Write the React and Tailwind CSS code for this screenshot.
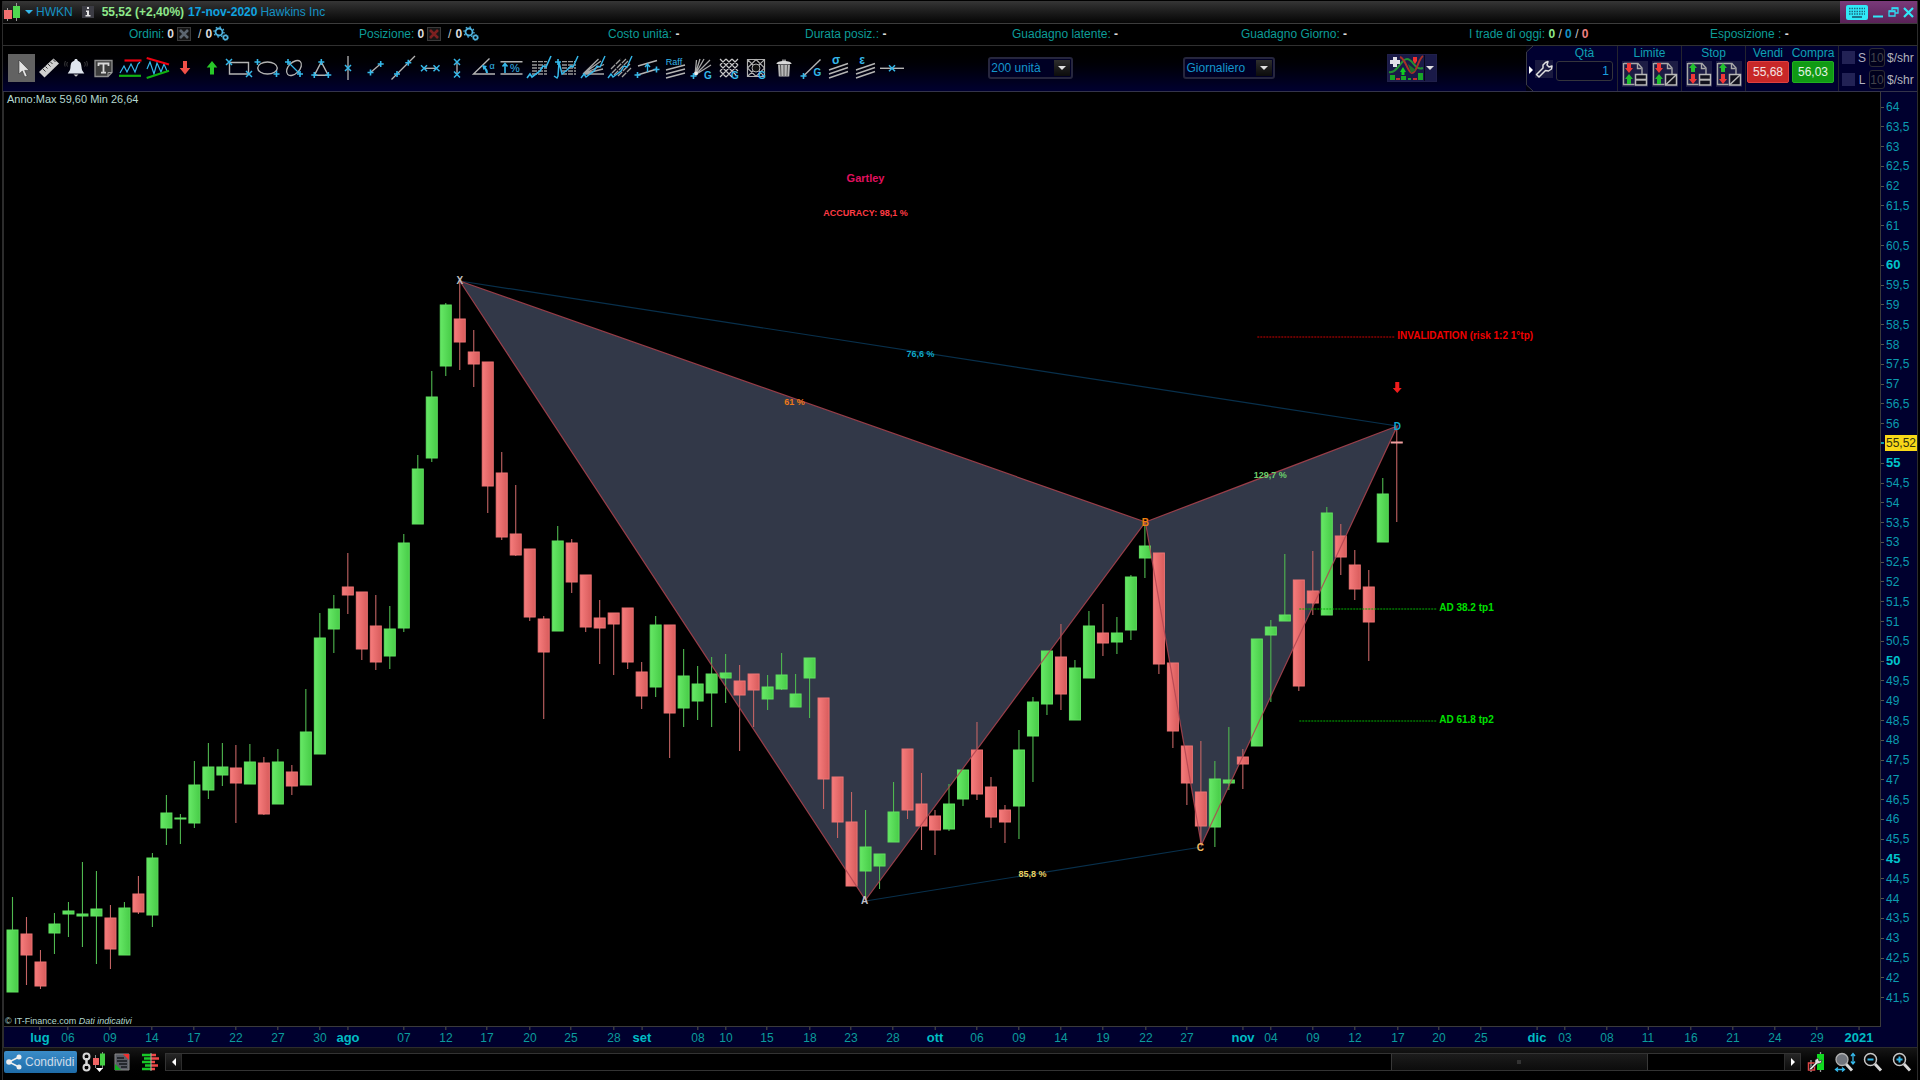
import React from "react";

const CYAN = "#35b8ea";
const GREY = "#b4b4b4";

/* [direction, high, body top, body bottom, low] in chart units */
const CANDLES = [
  ["u", 897, 930, 992, 992], ["d", 917, 934, 955, 985], ["d", 950, 962, 986, 989], ["u", 913, 924, 933, 954],
  ["u", 902, 911, 914, 937], ["u", 862, 914, 916, 947], ["u", 871, 909, 916, 964], ["d", 905, 918, 949, 969],
  ["u", 902, 908, 955, 955], ["d", 876, 894, 912, 914], ["u", 853, 858, 915, 927], ["u", 795, 813, 828, 845],
  ["u", 814, 818, 819, 844], ["u", 761, 785, 823, 828], ["u", 743, 767, 790, 799], ["u", 743, 767, 775, 786],
  ["d", 745, 768, 783, 823], ["u", 744, 762, 784, 784], ["d", 757, 763, 814, 815], ["u", 749, 762, 804, 804],
  ["d", 765, 772, 786, 795], ["u", 689, 732, 785, 785], ["u", 613, 638, 754, 754], ["u", 595, 609, 629, 653],
  ["d", 553, 587, 595, 614], ["d", 592, 592, 649, 660], ["d", 595, 626, 662, 670], ["u", 606, 629, 656, 669],
  ["u", 534, 543, 628, 632], ["u", 455, 469, 524, 524], ["u", 371, 397, 458, 462], ["u", 303, 305, 366, 376],
  ["d", 281, 319, 342, 370], ["d", 330, 352, 364, 387], ["d", 362, 362, 486, 513], ["d", 452, 473, 537, 540],
  ["d", 485, 534, 555, 556], ["d", 549, 549, 617, 621], ["d", 616, 619, 652, 719], ["u", 526, 541, 631, 631],
  ["d", 539, 543, 582, 593], ["d", 575, 575, 627, 632], ["d", 600, 618, 628, 664], ["d", 613, 613, 624, 675],
  ["d", 608, 608, 662, 669], ["d", 662, 672, 696, 709], ["u", 616, 625, 687, 697], ["d", 625, 625, 713, 758],
  ["u", 649, 676, 708, 727], ["u", 666, 684, 701, 720], ["u", 657, 674, 693, 727], ["u", 654, 673, 678, 703],
  ["d", 665, 681, 695, 751], ["d", 674, 674, 690, 727], ["u", 675, 687, 699, 710], ["u", 653, 675, 689, 690],
  ["u", 674, 694, 707, 707], ["u", 658, 658, 678, 718], ["d", 698, 698, 779, 809], ["d", 777, 777, 822, 838],
  ["d", 792, 822, 886, 886], ["u", 810, 847, 871, 900], ["u", 854, 854, 866, 889], ["u", 782, 812, 842, 842],
  ["d", 749, 749, 810, 819], ["d", 773, 804, 826, 850], ["d", 810, 816, 830, 855], ["u", 784, 804, 829, 831],
  ["u", 770, 770, 799, 806], ["d", 722, 750, 794, 800], ["d", 777, 787, 817, 828], ["d", 805, 810, 822, 843],
  ["u", 730, 750, 806, 839], ["u", 697, 702, 736, 782], ["u", 651, 651, 704, 715], ["d", 624, 657, 694, 710],
  ["u", 660, 668, 720, 720], ["u", 611, 626, 678, 678], ["d", 604, 633, 643, 656], ["u", 617, 633, 642, 654],
  ["u", 575, 577, 630, 640], ["u", 523, 546, 558, 578], ["d", 553, 553, 664, 674], ["d", 663, 663, 731, 748],
  ["d", 746, 746, 783, 805], ["d", 741, 792, 826, 845], ["u", 761, 779, 827, 847], ["u", 727, 780, 783, 790],
  ["d", 749, 757, 764, 789], ["u", 639, 639, 746, 746], ["u", 620, 627, 635, 702], ["u", 554, 615, 621, 621],
  ["d", 580, 580, 686, 691], ["d", 551, 591, 603, 615], ["u", 507, 513, 615, 615], ["d", 524, 536, 557, 575],
  ["d", 550, 565, 589, 600], ["d", 570, 587, 622, 661], ["u", 478, 494, 542, 542], ["d", 427, 442, 443, 522],
];

const X0 = 4;
const Y0 = 92;
const W = 1877;
const H = 934;

const DATES = [
  ["lug", 40], ["06", 68], ["09", 110], ["14", 152], ["17", 194], ["22", 236], ["27", 278], ["30", 320],
  ["ago", 348], ["07", 404], ["12", 446], ["17", 487], ["20", 530], ["25", 571], ["28", 614], ["set", 642],
  ["08", 698], ["10", 726], ["15", 767], ["18", 810], ["23", 851], ["28", 893], ["ott", 935], ["06", 977],
  ["09", 1019], ["14", 1061], ["19", 1103], ["22", 1146], ["27", 1187], ["nov", 1243], ["04", 1271],
  ["09", 1313], ["12", 1355], ["17", 1398], ["20", 1439], ["25", 1481], ["dic", 1537], ["03", 1565],
  ["08", 1607], ["11", 1648], ["16", 1691], ["21", 1733], ["24", 1775], ["29", 1817], ["2021", 1859],
];

/* The 55,5 step is left out: the last-price tag sits on it */
const PRICES = Array.from({ length: 46 }, (_, i) => 64 - i / 2).filter((p) => p !== 55.5);

const centred = "absolute -translate-x-1/2 -translate-y-1/2 whitespace-nowrap";
const started = "absolute -translate-y-1/2 whitespace-nowrap";

const NOTES = [
  { t: "Gartley", x: 866, y: 178, c: centred + " text-[11px] font-bold text-[#e0105f]" },
  { t: "ACCURACY: 98,1 %", x: 866, y: 213, c: centred + " text-[9px] font-bold text-[#ff3b45]" },
  { t: "76,6 %", x: 921, y: 354, c: centred + " text-[9px] font-bold text-[#0fa8c8]" },
  { t: "61 %", x: 795, y: 402, c: centred + " text-[9px] font-bold text-[#f07818]" },
  { t: "129,7 %", x: 1271, y: 475, c: centred + " text-[9px] font-bold text-[#6cd06c]" },
  { t: "85,8 %", x: 1033, y: 874, c: centred + " text-[9px] font-bold text-[#e8d060]" },
  { t: "X", x: 460, y: 281, c: centred + " text-[10px] font-bold text-[#c0c0c0]" },
  { t: "A", x: 865, y: 901, c: centred + " text-[10px] font-bold text-[#c0c0c8]" },
  { t: "B", x: 1146, y: 523, c: centred + " text-[10px] font-bold text-[#f08010]" },
  { t: "C", x: 1201, y: 848, c: centred + " text-[10px] font-bold text-[#f0b860]" },
  { t: "D", x: 1398, y: 427, c: centred + " text-[10px] font-bold text-[#10a8d0]" },
  { t: "INVALIDATION (risk 1:2 1°tp)", x: 1398, y: 336, c: started + " text-[10px] font-bold text-[#f00000]" },
  { t: "AD 38.2 tp1", x: 1440, y: 608, c: started + " text-[10px] font-bold text-[#00e000]" },
  { t: "AD 61.8 tp2", x: 1440, y: 720, c: started + " text-[10px] font-bold text-[#00e000]" },
];

function Plus({ x, y }) {
  return <path d={`M${x - 3} ${y}h6M${x} ${y - 3}v6`} stroke={CYAN} strokeWidth="1.6" />;
}
function Cross({ x, y }) {
  return <path d={`M${x - 3} ${y - 3}l6 6M${x + 3} ${y - 3}l-6 6`} stroke={CYAN} strokeWidth="1.5" />;
}
function Letter({ x, y, size = 10, children, bold = true }) {
  return (
    <text x={x} y={y} fontSize={size} fontWeight={bold ? 700 : 400} fill={CYAN} textAnchor="middle" fontFamily="Liberation Sans, sans-serif">
      {children}
    </text>
  );
}
const BLUE_ZIG = "M2 24l3-4 2 3 8-6 3-5 3 1 5-11";

const TOOLS = [
  ["Cursore", <path d="M11 6v14l3.300-3 2.500 6 2.400-1-2.500-5.600h4.500z" fill="#e4e4e4" stroke="#333" strokeWidth=".6" />],
  ["Righello", <g><path d="M18.500 4.500l5.500 5L9.500 23.500 4 18z" fill="#d0d0d0" /><path d="M8 15l2.500 2.500M10.500 12.500l2 2M13 10l2.500 2.500M15.500 8l2 2M18 5.500l2.500 2.500" stroke="#333" strokeWidth="1" /></g>],
  ["Allarme", <g><path d="M14 5c1 0 1.700.7 1.700 1.700 3 .8 3.600 3.300 3.800 6.300.2 3 1 4 2.800 6.500H5.700C7.500 17 8.300 16 8.500 13c.2-3 .8-5.500 3.800-6.300C12.300 5.700 13 5 14 5z" fill="#e0e6ee" /><path d="M11.500 20.500h5l-2.500 2.300z" fill="#c8c8c8" /><path d="M5.500 8c-1 1.500-1 3 0 4.500M3.500 7c-1 2-1 4-.4 5.500M22.500 8c1 1.500 1 3 0 4.500M24.500 7c1 2 1 4 .4 5.500" stroke="#555" strokeWidth=".7" /></g>],
  ["Testo", <g><path d="M6 6.500h17v12l-4 4H6z" fill="#3c3c3c" stroke="#909090" strokeWidth="1.300" /><path d="M23 18.500h-4v4" stroke="#a0a0a0" /><path d="M9.500 12V9.500h10V12M14.500 9.500v9M12 18.700h5" stroke="#d8d8d8" strokeWidth="1.800" /></g>],
  ["Supporto e resistenza", <g><path d="M4 19l4-7 3 6 4-8 4 8 3-8 2-2" stroke={CYAN} strokeWidth="1.200" /><path d="M8.500 6.500h17" stroke="#f00010" strokeWidth="2.200" /><path d="M3 21.800h22" stroke="#10b010" strokeWidth="2.200" /></g>],
  ["Triangolo automatico", <g><path d="M3 15l3-7 4 12 3-11 4 9 3-8 3 7" stroke={CYAN} strokeWidth="1.200" /><path d="M2.700 4L25 10.500" stroke="#f00010" strokeWidth="2.200" /><path d="M2.700 24L25 16.700" stroke="#10b010" strokeWidth="2.200" /></g>],
  ["Freccia giù", <path d="M12 7h4v7h3.300L14 20.500 8.700 14H12z" fill="#f05048" />],
  ["Freccia su", <path d="M12 20.500h4v-7h3.300L14 7 8.700 13.500H12z" fill="#28c828" />],
  ["Rettangolo", <g><path d="M4.500 8.500h19v11.500h-19z" stroke={GREY} strokeWidth="1.400" /><Cross x={4} y={8} /><Cross x={24} y={20} /></g>],
  ["Ellisse", <g><ellipse cx="14.500" cy="14" rx="9.800" ry="6" stroke={GREY} strokeWidth="1.400" /><Plus x={4.500} y={8} /><Plus x={23.500} y={20} /></g>],
  ["Ellisse obliqua", <g><ellipse cx="14" cy="14" rx="9" ry="5.500" transform="rotate(-45 14 14)" stroke={GREY} strokeWidth="1.300" /><path d="M8 8l12 12" stroke={CYAN} strokeWidth="1.200" /><Plus x={8} y={8} /><Plus x={20} y={20} /></g>],
  ["Triangolo", <g><path d="M14.300 8l7 13.300h-14z" stroke={GREY} strokeWidth="1.400" /><Plus x={14.300} y={8} /><Plus x={7.300} y={21} /><Plus x={21.300} y={21} /></g>],
  ["Linea verticale", <g><path d="M14 2v24" stroke={GREY} strokeWidth="1.300" /><Cross x={14} y={14} /></g>],
  ["Segmento", <g><path d="M9 19L20 9.500" stroke={GREY} strokeWidth="1.300" /><Plus x={9.500} y={18.500} /><Plus x={19.700} y={10} /></g>],
  ["Retta", <g><path d="M2.500 25.500L26 2" stroke={GREY} strokeWidth="1.300" /><Plus x={8} y={20} /><Plus x={19.300} y={8.700} /></g>],
  ["Segmento orizzontale", <g><path d="M8 14.300h12.500" stroke={GREY} strokeWidth="1.300" /><Cross x={8} y={14.300} /><Cross x={20.500} y={14.300} /></g>],
  ["Segmento verticale", <g><path d="M14 8v12.500" stroke={GREY} strokeWidth="1.300" /><Cross x={14} y={8} /><Cross x={14} y={20.500} /></g>],
  ["Angolo", <g><path d="M19.500 4.500L3.500 20H25" stroke={GREY} strokeWidth="1.400" /><path d="M17 19c0-3-1-4-3-6" stroke={CYAN} strokeWidth="2" /><path d="M12 11l5 1-3.500 4z" fill={CYAN} /><Letter x={22} y={15} size={9} bold={false}>α</Letter></g>],
  ["Variazione percentuale", <g><path d="M3.500 7.700h22M3.500 20h22" stroke={GREY} strokeWidth="1.400" /><path d="M8 19v-9M5.500 12.500L8 9.500l2.500 3" stroke={CYAN} strokeWidth="1.600" /><Letter x={18} y={18} size={11} bold={false}>%</Letter></g>],
  ["Ritracciamenti di Fibonacci", <g><path d="M7 7.700h15M7 11h15M7 14h15M7 17h15M7 20h15" stroke="#989898" strokeWidth="1.300" strokeDasharray="5 1" /><path d={BLUE_ZIG} stroke={CYAN} strokeWidth="1.600" /></g>],
  ["Estensioni di Fibonacci", <g><path d="M10 7.700h14M10 11h14M10 14h14M10 17h14M10 20h14" stroke="#989898" strokeWidth="1.300" strokeDasharray="5 1" /><path d="M2 22l3 2 1-2 1-14 3 12 5-4 4-4 2 1 5-11" stroke={CYAN} strokeWidth="1.500" /><Plus x={6} y={8} /></g>],
  ["Ventaglio di Fibonacci", <g><path d="M4 20L19.500 5M4 20L25 10.500M4 20l20-5M4 20h21M4 20L22 7" stroke="#a8a8a8" strokeWidth="1.300" /><path d={BLUE_ZIG} stroke={CYAN} strokeWidth="1.400" /></g>],
  ["Canali di Fibonacci", <g><path d="M5 15L15 5M6 19L20 5M8 21L22 7M12 22l12-12M16 23l9-9" stroke="#a0a0a0" strokeWidth="1.300" strokeDasharray="6 1" /><path d={BLUE_ZIG} stroke={CYAN} strokeWidth="1.400" /></g>],
  ["Canale", <g><path d="M5 12l19-5.500M4.500 21L24 15" stroke={GREY} strokeWidth="1.500" /><path d="M14.500 18v-7M12 13l2.500-3 2.500 3" stroke={CYAN} strokeWidth="1.400" /><Plus x={4.500} y={21} /><Plus x={23.500} y={15.500} /></g>],
  ["Canale di Raff", <g><Letter x={13} y={10.500} size={9} bold={false}>Raff</Letter><path d="M5 16l19-5M5 20l19-5M5 24l19-5" stroke={GREY} strokeWidth="1.400" /></g>],
  ["Ventaglio di Gann", <g><path d="M7 21L8.500 6M7 21l5-16M7 21L16 5M7 21L22 6M7 21l16-10" stroke="#a8a8a8" strokeWidth="1.300" /><circle cx="8" cy="19.500" r="2" fill="#eee" /><Plus x={5.500} y={22} /><Letter x={20} y={25}>G</Letter></g>],
  ["Griglia di Gann", <g><path d="M5 5l16 16M11 5l12 12M17 5l6 6M5 11l12 12M5 17l6 6M23 5L5 23M17 5L5 17M11 5l-6 6M23 11L11 23" stroke="#c8c8c8" strokeWidth="1.200" /><Letter x={20} y={25}>G</Letter></g>],
  ["Quadrato di Gann", <g><path d="M5.500 5.500h17v17h-17zM5.500 5.500l17 17M22.500 5.500l-17 17M14 5.500l8.500 8.500-8.500 8.500L5.500 14z" stroke="#b0b0b0" strokeWidth="1.200" /><circle cx="14" cy="14" r="4" fill="#111" stroke="#b0b0b0" /><Letter x={20} y={25}>G</Letter></g>],
  ["Elimina", <g><path d="M12 5.500h4v1.500h-4z" fill="#888" /><path d="M6.500 10c0-2 3-3 7.500-3s7.500 1 7.500 3z" fill="#d8d8d8" /><path d="M8 10.500h12l-.8 12H8.800z" fill="#b8b8b8" /><path d="M10.500 11l.5 11M14 11v11M17.500 11l-.5 11" stroke="#555" strokeWidth="1" /></g>],
  ["Linea di Gann", <g><path d="M6.500 22L23.500 5.500" stroke={GREY} strokeWidth="1.400" /><Plus x={6.500} y={22} /><Letter x={20.500} y={21.500}>G</Letter></g>],
  ["Deviazione standard", <g><Letter x={12} y={10} size={12}>σ</Letter><path d="M5 16l19-6.500M5 20l19-6.500M5 24l19-6.500" stroke={GREY} strokeWidth="1.400" /></g>],
  ["Errore standard", <g><Letter x={11} y={10} size={12}>ε</Letter><path d="M5 16l19-6.500M5 20l19-6.500M5 24l19-6.500" stroke={GREY} strokeWidth="1.400" /></g>],
  ["Linea orizzontale", <g><path d="M2 14.300h24" stroke={GREY} strokeWidth="1.400" /><Cross x={14} y={14.300} /></g>],
];

function Gears() {
  return (
    <svg className="h-4 w-4" viewBox="0 0 16 16" fill="none" stroke="#4fb4e0" aria-hidden="true">
      <circle cx="6" cy="6" r="3.500" strokeWidth="1.800" />
      <circle cx="6" cy="6" r="5" strokeWidth="1.300" strokeDasharray="1.600 2.300" />
      <circle cx="12.500" cy="11.500" r="2" strokeWidth="1.400" />
      <circle cx="12.500" cy="11.500" r="3" strokeWidth="1" strokeDasharray="1.100 1.200" />
    </svg>
  );
}

function ClearButton({ label, color }) {
  return (
    <button aria-label={label} className="flex h-[14px] w-[14px] items-center justify-center border border-[#3a3a3a] bg-[#161616]">
      <svg className="h-2.5 w-2.5" viewBox="0 0 10 10" aria-hidden="true">
        <path d="M1 1l8 8M9 1L1 9" stroke={color} strokeWidth="2.600" />
      </svg>
    </button>
  );
}

function Counter({ label, clearColor }) {
  return (
    <div className="flex items-center">
      <span className="text-[#0d9c98]">{label}</span>
      <b className="ml-[3px] text-[#dcdcdc]">0</b>
      <span className="ml-[3px] flex"><ClearButton label={"Annulla " + label} color={clearColor} /></span>
      <span className="ml-[7px] text-[#c8c8c8]">/</span>
      <b className="ml-1 text-[#dcdcdc]">0</b>
      <button aria-label={"Impostazioni " + label} className="ml-px"><Gears /></button>
    </div>
  );
}

function Stat({ label }) {
  return (
    <div className="whitespace-nowrap">
      <span className="text-[#0d9c98]">{label}</span> <b className="text-[#dcdcdc]">-</b>
    </div>
  );
}

function Picker({ label, value, options, className }) {
  return (
    <div className={"relative h-[22px] shrink-0 " + className}>
      <select aria-label={label} defaultValue={value} className="h-full w-full appearance-none rounded-[3px] border-2 border-[#26263e] bg-[#000024] pl-px text-[12px] text-[#1496cc] outline-none">
        {options.map((o) => <option key={o}>{o}</option>)}
      </select>
      <span className="pointer-events-none absolute top-[3px] right-[3px] bottom-[3px] flex w-4 items-center justify-center bg-gradient-to-b from-[#2e2e2e] to-[#0c0c0c]">
        <svg className="h-1 w-2" viewBox="0 0 8 4" aria-hidden="true"><path d="M0 0h8L4 4z" fill="#e0e0e0" /></svg>
      </span>
    </div>
  );
}

function OrderButton({ label, up, slash }) {
  const topColor = up ? "#22c030" : "#f03838";
  const lowColor = up ? "#f03838" : "#22c030";
  const topArrow = up ? "M7 2l4 5H9v4H5V7H3z" : "M5 2h4v5h2l-4 5-4-5h2z";
  const lowArrow = up ? "M5 13h4v5h2l-4 5-4-5h2z" : "M7 13l4 5H9v5H5v-5H3z";
  return (
    <button aria-label={label} className="h-[26px] w-[26px] bg-[#1c1c44]">
      <svg viewBox="0 0 26 26" fill="none" aria-hidden="true">
        <path d="M2 2.500h14l4 4.500v6M1.500 2v21.500h11" stroke="#a8a8a8" strokeWidth="1.400" />
        <path d="M15.500 3v4.500h4" stroke="#a8a8a8" strokeWidth="1.400" />
        <path d={topArrow} fill={topColor} />
        <path d={lowArrow} fill={lowColor} />
        <path d="M13.500 13.500h11v10.500h-11z" fill="#10101c" stroke="#b8b8b8" strokeWidth="1.500" />
        {slash ? <path d="M14 23.500l10-9.500" stroke="#b8b8b8" strokeWidth="1.500" /> : <path d="M14 18.700h10" stroke="#b8b8b8" strokeWidth="2" />}
      </svg>
    </button>
  );
}

function PairColumn({ title, up }) {
  return (
    <div className="flex w-16 flex-col items-center border-l border-[#24242e]">
      <span className="h-[15px] leading-[14px] text-[#0fa0b4]">{title}</span>
      <div className="flex gap-1">
        <OrderButton label={title + " riga"} up={up} />
        <OrderButton label={title + " grafico"} up={up} slash />
      </div>
    </div>
  );
}

function TradePanel() {
  return (
    <div className="relative flex h-full shrink-0 bg-[#000030] pr-0.5 pl-[9px]">
      <svg className="absolute top-0 left-0 h-full w-2" viewBox="0 0 8 45" fill="none" preserveAspectRatio="none" aria-hidden="true">
        <path d="M0 0h7L0.500 6v33L7 45H0z" fill="#000010" />
        <path d="M7 0L.5 6v33L7 45" stroke="#3a3a44" />
        <path d="M3 20l4 4-4 4z" fill="#fff" />
      </svg>
      <button aria-label="Impostazioni ordine" className="mt-[14px] h-[18px] w-[18px] bg-[#1a1a40]">
        <svg viewBox="0 0 18 18" fill="none" stroke="#e0e0e0" strokeWidth="1.500" strokeLinejoin="round" aria-hidden="true">
          <path d="M10.500 2.500L13 1.500l-1 3.500 2 2 3-1-.5 3-3 2-3-.5-6.500 6.500-2.500-2.500L8 8V5z" />
        </svg>
      </button>
      <div className="ml-[3px] flex w-[57px] flex-col items-center">
        <label htmlFor="qty" className="h-[15px] leading-[14px] text-[#0fa0b4]">Qtà</label>
        <input id="qty" defaultValue="1" className="h-5 w-full rounded-[3px] border border-[#34343c] bg-[#000024] pr-[3px] text-right text-[12px] text-[#1ba0e0] outline-none" />
      </div>
      <div className="ml-1 flex">
        <PairColumn title="Limite" />
        <PairColumn title="Stop" up />
      </div>
      <div className="flex gap-[3px] border-l border-[#24242e] pl-px">
        <div className="flex w-[42px] flex-col items-center">
          <span className="h-[15px] leading-[14px] text-[#0fa0b4]">Vendi</span>
          <button className="h-[22px] w-full rounded-[2px] border border-[#e04040] bg-[#c82828] text-[#f4e4e4]">55,68</button>
        </div>
        <div className="flex w-[42px] flex-col items-center">
          <span className="h-[15px] leading-[14px] text-[#0fa0b4]">Compra</span>
          <button className="h-[22px] w-full rounded-[2px] border border-[#20b020] bg-[#109a14] text-[#e4f4e4]">56,03</button>
        </div>
      </div>
      <div className="ml-1 flex flex-col justify-center gap-[3px] border-l border-[#24242e] pl-[3px]">
        {["S", "L"].map((k) => (
          <div key={k} className="flex h-[19px] items-center">
            <input type="checkbox" id={"stop" + k} className="h-[13px] w-[13px] appearance-none bg-[#222255]" />
            <label htmlFor={"stop" + k} className="w-[14px] text-center text-[#b0b0c0]">{k}</label>
            <input aria-label={"Valore " + k} defaultValue="10" className="h-[19px] w-4 rounded-[3px] border border-[#2c2c34] bg-[#00001c] text-center text-[12px] text-[#44444c] outline-none" />
            <span className="ml-0.5 w-7 text-[#b4b4bc]">$/shr</span>
          </div>
        ))}
      </div>
    </div>
  );
}

function TitleBar() {
  return (
    <header className="flex h-[23px] items-center border-b border-[#3c3c3c] bg-gradient-to-b from-[#363636] to-[#060606]">
      <svg className="h-5 w-[18px]" viewBox="0 0 18 20" aria-hidden="true">
        <path d="M4.500 6v13M13.500 1v18" stroke="#9a9a9a" />
        <path d="M1 8h8v9H1z" fill="#f07070" /><path d="M10 4h7v12h-7z" fill="#50d850" />
      </svg>
      <button aria-label="Scegli titolo" className="ml-1">
        <svg className="h-1 w-2" viewBox="0 0 8 4" aria-hidden="true"><path d="M0 0h8L4 4z" fill="#35b8ea" /></svg>
      </button>
      <span className="ml-[3px] text-[#1592c4]">HWKN</span>
      <button aria-label="Informazioni" className="ml-[9px] flex h-3 w-3 items-center justify-center bg-[#3c3c44]">
        <svg className="h-2.5 w-2" viewBox="0 0 8 10" aria-hidden="true"><path d="M3 0h2v2H3zM2 3.500h3V8h1.500v1.500h-5V8H3V5H2z" fill="#e4e4e4" /></svg>
      </button>
      <b className="ml-2 text-[#8ee88a]">55,52 (+2,40%)</b>
      <b className="ml-1 text-[#10a4e0]">17-nov-2020</b>
      <span className="ml-[3px] text-[#1592c4]">Hawkins Inc</span>
      <div className="ml-auto flex h-[22px] items-center bg-gradient-to-b from-[#7a3a7a] to-[#5a2258] pr-[3px] pl-1.5">
        <button aria-label="Tastiera">
          <svg className="h-[15px] w-[22px]" viewBox="0 0 22 15" aria-hidden="true">
            <rect width="22" height="15" rx="2" fill="#30e8f8" />
            <path d="M3 3.500h16M3 6.500h16M3 9h16" stroke="#1a6a80" strokeWidth="1.600" strokeDasharray="1.500 1" />
            <path d="M6 12h10" stroke="#1a6a80" strokeWidth="1.800" />
          </svg>
        </button>
        <button aria-label="Riduci" className="ml-[5px]">
          <svg className="h-3 w-2.5" viewBox="0 0 10 12" aria-hidden="true"><path d="M0 10.500h10" stroke="#30e8f8" strokeWidth="2" /></svg>
        </button>
        <button aria-label="Ripristina" className="ml-[5px]">
          <svg className="h-2.5 w-[11px]" viewBox="0 0 11 10" fill="none" stroke="#30d8f0" strokeWidth="1.300" aria-hidden="true">
            <path d="M4 3V1h6v5H7.500M1 4h6v5H1z" /><path d="M4 1.300h6M1 4.300h6" strokeWidth="1.800" />
          </svg>
        </button>
        <button aria-label="Chiudi" className="ml-1">
          <svg className="h-[11px] w-[11px]" viewBox="0 0 11 11" aria-hidden="true"><path d="M1 1l9 9M10 1l-9 9" stroke="#30e8f8" strokeWidth="2.200" /></svg>
        </button>
      </div>
    </header>
  );
}

function Chart() {
  return (
    <div className="relative flex-1 border-r border-b border-[#3a3a3a] bg-black">
      <svg className="absolute inset-0 h-full w-full" viewBox={`${X0} ${Y0} ${W} ${H}`} preserveAspectRatio="none" fill="none" role="img" aria-label="Grafico a candele HWKN con pattern Gartley">
        <defs>
          <linearGradient id="up"><stop offset="0" stopColor="#66e866" /><stop offset="1" stopColor="#48cc48" /></linearGradient>
          <linearGradient id="down"><stop offset="0" stopColor="#f67c7c" /><stop offset="1" stopColor="#d85c5c" /></linearGradient>
        </defs>
        <path d="M460 281L1146 522 866 900zM1146 522L1398 426 1202 845z" fill="#323848" />
        <path d="M460 281L1398 426M866 901L1202 847" stroke="#08304c" strokeWidth="1.200" />
        {CANDLES.map(([dir, high, top, bottom, low], i) => {
          const x = Math.round((12.4 + 13.99 * i) * 2) / 2;
          const up = dir === "u";
          const last = i === CANDLES.length - 1;
          return (
            <g key={i}>
              <path d={`M${x} ${high}V${low}`} stroke={up ? "#4fb84f" : "#c46464"} strokeWidth="1.100" />
              <rect x={x - 5.500} y={top} width="11" height={Math.max(bottom - top, 1)} fill={up ? "url(#up)" : "url(#down)"} stroke={last ? "#f0a0a0" : up ? "#60e060" : "#ee7474"} />
            </g>
          );
        })}
        <path d="M460 281L1146 522 866 900zM1146 522L1398 426 1202 845z" stroke="#b04450" strokeOpacity=".85" strokeWidth="1.200" />
        <path d="M1258 337h137" stroke="#d00000" strokeDasharray="2 1" />
        <path d="M1300 609h137M1300 721h137" stroke="#00b400" strokeDasharray="2 1" />
        <path d="M1396 382h4v6h2.500l-4.500 5-4.500-5h2.500z" fill="#f01c1c" />
      </svg>
      {NOTES.map((n) => (
        <span key={n.t} className={n.c + " leading-none"} style={{ left: `${((n.x - X0) / W) * 100}%`, top: `${((n.y - Y0) / H) * 100}%` }}>
          {n.t}
        </span>
      ))}
      <p className="relative pt-px pl-[3px] text-[11px] leading-3 text-[#b4d8d0]">Anno:Max 59,60 Min 26,64</p>
      <p className="absolute bottom-0 left-px text-[9px] leading-[10px] text-[#b4d8d0]">
        © IT-Finance.com <i>Dati indicativi</i>
      </p>
    </div>
  );
}

function DateAxis() {
  return (
    <div className="relative h-5 bg-[#00002e]">
      {DATES.map(([label, x], i) => {
        const bold = !/^\d\d$/.test(label);
        return (
          <div key={i} className="absolute top-0 flex -translate-x-1/2 flex-col items-center" style={{ left: `${((x - X0) / W) * 100}%` }}>
            <span className="h-[3px] w-px bg-[#55554a]" />
            <span className={bold ? "text-[13px] leading-4 font-bold text-[#00bcc4]" : "text-[12px] leading-4 text-[#0b9c9c]"}>{label}</span>
          </div>
        );
      })}
    </div>
  );
}

function PriceAxis() {
  const place = (p) => `${((107 + (64 - p) * 39.54 - Y0) / 954) * 100}%`;
  return (
    <div className="relative w-9 shrink-0 bg-[#00002e]">
      {PRICES.map((p) => {
        const bold = p % 5 === 0;
        return (
          <div key={p} className="absolute left-0 flex -translate-y-1/2 items-center" style={{ top: place(p) }}>
            <span className="mr-0.5 h-px w-[3px] bg-[#55554a]" />
            <span className={bold ? "text-[13px] leading-4 font-bold text-[#00c4cc]" : "text-[12px] leading-4 text-[#0b9cb0]"}>{String(p).replace(".", ",")}</span>
          </div>
        );
      })}
      <div className="absolute left-0 flex -translate-y-1/2 items-center" style={{ top: place(55.52) }}>
        <span className="mr-px h-0.5 w-[3px] bg-[#0b9cb0]" />
        <span className="h-4 w-8 bg-[#f8d818] text-center text-[12px] leading-4 text-[#303010]">55,52</span>
      </div>
    </div>
  );
}

function Magnifier({ children }) {
  return (
    <svg className="h-5 w-5" viewBox="0 0 20 20" fill="none" aria-hidden="true">
      <path d="M12 12l6 6.500" stroke="#d8d8d8" strokeWidth="3" />
      <circle cx="7.500" cy="7.500" r="6" stroke="#c8c8c8" strokeWidth="1.500" />
      {children}
    </svg>
  );
}

function BottomBar() {
  return (
    <footer className="flex h-[33px] items-center border-t border-[#2c2c2c] bg-gradient-to-b from-[#161616] to-black pb-2 pl-px">
      <button className="mt-1 flex h-[22px] w-[73px] items-center rounded-[2px] bg-gradient-to-b from-[#3a8cc8] to-[#1e6ca8] pl-0.5 text-[#d0dce8]">
        <svg className="h-4 w-4 shrink-0" viewBox="0 0 16 16" aria-hidden="true">
          <path d="M13 3L3 8l10 5" fill="none" stroke="#eee" strokeWidth="1.500" />
          <circle cx="13" cy="3" r="2.500" fill="#eee" /><circle cx="3" cy="8" r="2.800" fill="#eee" /><circle cx="13" cy="13" r="2.500" fill="#eee" />
        </svg>
        <span className="ml-[3px]">Condividi</span>
      </button>
      <button aria-label="Collega grafici" className="mt-1 ml-[5px]">
        <svg className="h-5 w-6" viewBox="0 0 24 20" fill="none" aria-hidden="true">
          <rect x="1.500" y="1.500" width="6" height="6" rx="3" stroke="#d8d8d8" strokeWidth="2" />
          <rect x="1.500" y="12.500" width="6" height="6" rx="3" stroke="#d8d8d8" strokeWidth="2" />
          <path d="M4.500 6v8" stroke="#d8d8d8" strokeWidth="2.500" />
          <path d="M13.500 3v13M20.500 0v17" stroke="#888" />
          <path d="M11 6h6v7h-6z" fill="#f06464" /><path d="M18 1.500h5v12h-5z" fill="#44d044" />
          <path d="M14 16h7l-3.500 4z" fill="#fff" />
        </svg>
      </button>
      <button aria-label="Dettagli" className="mt-1 ml-2">
        <svg className="h-[18px] w-4" viewBox="0 0 16 18" fill="none" aria-hidden="true">
          <path d="M1 1h14v16H1z" fill="#5a5e66" stroke="#888" />
          <path d="M3 5h7M3 8h10M5 11h8M7 14h6" stroke="#15181c" strokeWidth="1.500" />
          <path d="M9 1h6v6z" fill="#f03030" /><path d="M1 17v-6l6 6z" fill="#10b020" />
        </svg>
      </button>
      <button aria-label="Profondità" className="mt-1 ml-[11px]">
        <svg className="h-[18px] w-[18px]" viewBox="0 0 18 18" fill="none" strokeWidth="2.600" aria-hidden="true">
          <path d="M1 2h9M3 5.500h7M1 9h9M4 12.500h6M1 16h9" stroke="#18c828" />
          <path d="M10 2h5M10 5.500h8M10 9h4M10 12.500h7M10 16h4" stroke="#f04848" />
          <path d="M10 0v18" stroke="#aaa" strokeWidth="1" />
        </svg>
      </button>
      <div className="mt-1 ml-1.5 flex h-[18px] flex-1 border border-[#333] bg-black">
        <button aria-label="Scorri a sinistra" className="flex w-4 items-center justify-center border-r border-[#2c2c2c] bg-gradient-to-b from-[#262626] to-[#0c0c0c]">
          <svg className="h-2 w-1" viewBox="0 0 4 8" aria-hidden="true"><path d="M4 0v8L0 4z" fill="#fff" /></svg>
        </button>
        <div className="grid flex-1 grid-cols-[1208fr_257fr_136fr]">
          <div className="col-start-2 flex items-center justify-center border-x border-[#383838] bg-gradient-to-b from-[#1c1c1c] to-[#0c0c0c]">
            <span className="h-1 w-1 bg-[#333]" />
          </div>
        </div>
        <button aria-label="Scorri a destra" className="flex w-4 items-center justify-center border-l border-[#2c2c2c] bg-gradient-to-b from-[#262626] to-[#0c0c0c]">
          <svg className="h-2 w-1" viewBox="0 0 4 8" aria-hidden="true"><path d="M0 0v8l4-4z" fill="#fff" /></svg>
        </button>
      </div>
      <button aria-label="Stile grafico" className="mt-1 ml-1.5">
        <svg className="h-5 w-[18px]" viewBox="0 0 18 20" fill="none" aria-hidden="true">
          <path d="M4 8v12M13.500 0v20" stroke="#999" strokeWidth="1.300" />
          <path d="M1.500 11h6v7h-6z" stroke="#e04848" strokeWidth="1.500" /><path d="M10 2h7v16h-7z" fill="#10d820" />
          <path d="M2 17l6-6V8l3-2 1 3 3-1-1 3-4 1-6 6z" fill="#ddd" stroke="#222" strokeWidth=".6" />
        </svg>
      </button>
      <button aria-label="Zoom automatico" className="mt-1 ml-[9px]">
        <svg className="h-5 w-[22px]" viewBox="0 0 22 20" fill="none" aria-hidden="true">
          <path d="M12 12l6 6.500" stroke="#d8d8d8" strokeWidth="3" />
          <circle cx="8" cy="7.500" r="6" fill="#70747c" stroke="#b0b0b0" strokeWidth="1.300" />
          <path d="M19 2v9M17 4l2-2.500L21 4M17 9.500l2 2.500 2-2.500M2 17.500h8M4 15.500l-2.500 2 2.500 2M8 15.500l2.500 2-2.500 2" stroke={CYAN} strokeWidth="1.300" />
        </svg>
      </button>
      <button aria-label="Riduci zoom" className="mt-1 ml-[7px]"><Magnifier><path d="M4.500 7.500h6" stroke={CYAN} strokeWidth="2" /></Magnifier></button>
      <button aria-label="Aumenta zoom" className="mt-1 mr-[5px] ml-[9px]"><Magnifier><path d="M4.500 7.500h6M7.500 4.500v6" stroke={CYAN} strokeWidth="2" /></Magnifier></button>
    </footer>
  );
}

export default function App() {
  return (
    <div className="flex min-h-screen flex-col bg-black px-0.5 pt-px font-['Liberation_Sans',Arial,sans-serif] text-[12px] leading-4">
      <div className="flex flex-1 flex-col border-x border-[#2c2c2c]">
        <TitleBar />
        <div className="grid h-[22px] grid-cols-[230fr_249fr_197fr_207fr_229fr_228fr_241fr_207fr] items-center border-b border-[#303030] pb-px pl-[126px]">
          <Counter label="Ordini:" clearColor="#5c6670" />
          <Counter label="Posizione:" clearColor="#7c2020" />
          <Stat label="Costo unità:" />
          <Stat label="Durata posiz.:" />
          <Stat label="Guadagno latente:" />
          <Stat label="Guadagno Giorno:" />
          <div className="whitespace-nowrap text-[#c8c8c8]">
            <span className="text-[#0d9c98]">I trade di oggi:</span> <b className="text-[#8ee88a]">0</b> / <b className="text-[#1592c4]">0</b> / <b className="text-[#f08080]">0</b>
          </div>
          <Stat label="Esposizione :" />
        </div>
        <div className="flex h-[46px] items-center border-b border-[#34344a] bg-gradient-to-b from-black to-[#000030] pl-[5px]">
          <div className="mb-0.5 grid w-[898px] grid-cols-[repeat(33,minmax(0,1fr))]">
            {TOOLS.map(([name, art], i) => (
              <button key={name} aria-label={name} className={i === 0 ? "flex h-7 justify-center bg-[#626262]" : "flex h-7 justify-center"}>
                <svg className="h-7 w-7 shrink-0" viewBox="0 0 28 28" fill="none" aria-hidden="true">{art}</svg>
              </button>
            ))}
          </div>
          <div className="mb-0.5 grid flex-1 grid-cols-[82fr_auto_110fr_auto_111fr_auto_89fr] items-center">
            <Picker label="Unità" value="200 unità" options={["100 unità", "200 unità", "500 unità"]} className="col-start-2 w-[85px]" />
            <Picker label="Periodo" value="Giornaliero" options={["Giornaliero", "Settimanale", "Mensile"]} className="col-start-4 w-[92px]" />
            <div className="col-start-6 flex h-7 w-[50px] border border-[#20204a] bg-[#1a1a48]">
              <button aria-label="Indicatori" className="w-9">
                <svg viewBox="0 0 36 26" fill="none" aria-hidden="true">
                  <path d="M1 17c8 2 12-13 18-13s8 12 16 9" stroke="#209030" strokeWidth="2" />
                  <path d="M12 2c6 2 7 15 12 16 5 0 6-14 11-17" stroke="#a83028" strokeWidth="2" />
                  <path d="M20 9l8 6-5 3z" fill="#1c7028" />
                  <path d="M7 2v10M2 7h10" stroke="#e0e0e8" strokeWidth="4" />
                  <path d="M25 2h4v4l-2 3-2-3z" fill="#f03030" />
                  <path d="M12 17l3-5 3 5h-1.500v3h-3v-3z" fill="#10d020" />
                  <path d="M2 20h5v5H2zM13 21h5v4h-5zM20 23h3v2h-3zM30 18h5v7h-5z" fill="#18a828" />
                  <path d="M8 23h4v2H8zM25 23h4v2h-4z" fill="#c03030" />
                </svg>
              </button>
              <button aria-label="Altri indicatori" className="flex flex-1 items-center justify-center border-l border-[#08081c]">
                <svg className="h-1 w-2" viewBox="0 0 8 4" aria-hidden="true"><path d="M0 0h8L4 4z" fill="#e0e0e0" /></svg>
              </button>
            </div>
          </div>
          <TradePanel />
        </div>
        <div className="flex flex-1 border-l border-[#2c2c2c]">
          <div className="flex min-h-[600px] min-w-0 flex-1 flex-col">
            <Chart />
            <DateAxis />
          </div>
          <PriceAxis />
        </div>
        <BottomBar />
      </div>
    </div>
  );
}
